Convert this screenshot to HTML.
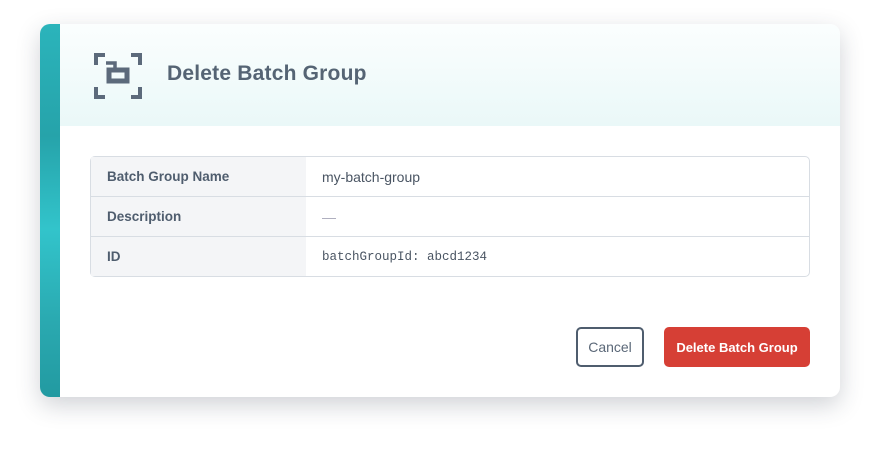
<!DOCTYPE html>
<html><head><style>
body{margin:0;width:880px;height:453px;background:#fff;font-family:"Liberation Sans",sans-serif;position:relative;overflow:hidden}
.card{position:absolute;left:40px;top:24px;width:800px;height:373px;background:#fff;border-radius:10px;box-shadow:0 8px 24px rgba(40,50,70,.22);overflow:hidden}
.stripe{position:absolute;left:0;top:0;width:20px;height:100%;background:linear-gradient(180deg,#2bb4bb 0%,#26a3aa 30%,#32c4cb 55%,#2aa9b0 80%,#229aa1 100%)}
.head{position:absolute;left:20px;top:0;right:0;height:102px;background:linear-gradient(180deg,#fbfefe 0%,#eaf8f8 100%)}
.title{position:absolute;left:127px;top:38px;font-size:21px;letter-spacing:.2px;font-weight:bold;color:#556474}
table{position:absolute;left:50px;top:132px;width:720px;border-collapse:separate;border-spacing:0;border:1px solid #d8dde3;border-radius:5px;font-size:14px}
td{height:39px;border-bottom:1px solid #d8dde3;padding:0 16px;color:#4a5563}
tr:last-child td{border-bottom:none}
td.l{width:183px;background:#f4f5f7;font-weight:bold;color:#4f5d6e;font-size:13.5px}
.mono{font-family:"Liberation Mono",monospace;font-size:12.5px}
.btn{position:absolute;top:303px;height:40px;border-radius:5px;font-size:14px;display:flex;align-items:center;justify-content:center;box-sizing:border-box}
</style></head><body>
<div class="card">
<div class="stripe"></div>
<div class="head"></div>
<svg style="position:absolute;left:54px;top:28px" width="48" height="48" viewBox="0 0 48 48" fill="none" stroke="#5c6a7b" stroke-width="4">
<path d="M2 13V3h9M37 3h9v10M46 35v10h-9M11 45H2V35"/>
<path d="M12 11h9v5" stroke-width="3.5"/>
<rect x="15" y="18" width="18" height="11" stroke-width="5"/>
</svg>
<div class="title">Delete Batch Group</div>
<table>
<tr><td class="l">Batch Group Name</td><td>my-batch-group</td></tr>
<tr><td class="l">Description</td><td style="color:#aab">—</td></tr>
<tr><td class="l">ID</td><td class="mono">batchGroupId: abcd1234</td></tr>
</table>
<div class="btn" style="left:536px;width:68px;border:2px solid #4f5d6e;color:#5b6878">Cancel</div>
<div class="btn" style="left:624px;width:146px;background:#d63f35;color:#fff;font-weight:bold;font-size:13px">Delete Batch Group</div>
</div>
</body></html>
